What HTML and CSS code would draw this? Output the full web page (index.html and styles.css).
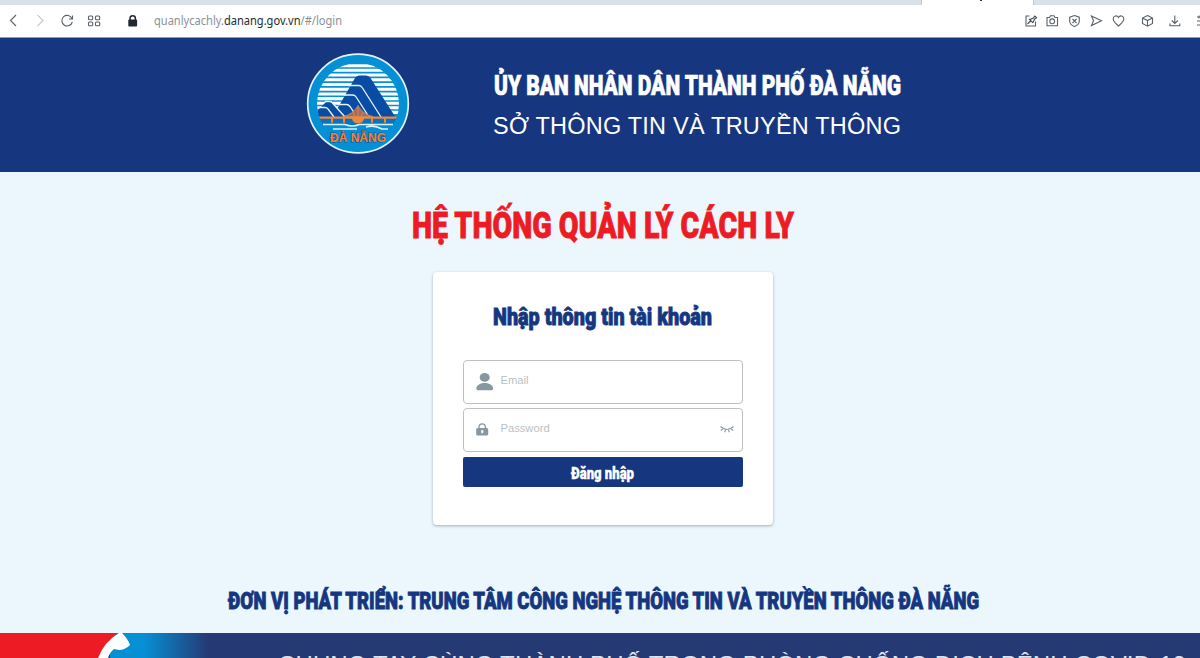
FILE: index.html
```html
<!DOCTYPE html>
<html lang="vi">
<head>
<meta charset="utf-8">
<title>Hệ thống quản lý cách ly</title>
<link rel="stylesheet" href="styles.css">
</head>
<body>
<div class="tabs"><div class="tab"><i class="tab-mark"></i></div></div>
<nav class="toolbar">
  <svg class="nav-icons" width="140" height="32" viewBox="0 0 140 32">
    <path d="M16 10l-5.500 5.500 5.500 5.500"/>
    <path class="faint" d="M37.500 10l5.500 5.500-5.500 5.500"/>
    <path d="M72 13.500a5.300 5.300 0 1 0 .3 3.500M72.500 10.500v3.500h-3.500"/>
    <g><rect x="88.500" y="11" width="4.200" height="3.800" rx="1"/><rect x="95.500" y="11" width="4.200" height="3.800" rx="1"/><rect x="88.500" y="17" width="4.200" height="3.800" rx="1"/><rect x="95.500" y="17" width="4.200" height="3.800" rx="1"/></g>
    <path class="lock" d="M130 15v-1.500a2.700 2.700 0 0 1 5.400 0V15"/><rect class="lock-body" x="128.300" y="14.500" width="8.800" height="7" rx="1"/>
  </svg>
  <div class="url">
    <svg width="192" height="32"><text x="0" y="20" textLength="188" lengthAdjust="spacingAndGlyphs">quanlycachly.<tspan class="domain">danang.gov.vn</tspan>/#/login</text></svg>
  </div>
  <svg class="tool-icons" width="180" height="32" viewBox="1020 5 180 32">
    <path d="M1029.500 16h-3.500v10h9.500v-4.500"/><path class="pin" d="M1027.500 24l3-3M1029 18.800l4 4M1030 19.500l3.300-1.500 1.500-2 1.700 1.700-2 1.500-1.500 3.300"/>
    <path d="M1047 17.500h2.500l1-1.800h3.500l1 1.800h2.500v8.300H1047z"/><circle cx="1052.200" cy="21.300" r="2.400"/>
    <path d="M1074.500 15.500l4.800 1.700v4.300q-.5 3.500-4.800 5-4.300-1.500-4.800-5v-4.300zM1072.500 19l4 4M1076.500 19l-4 4"/>
    <path d="M1091.500 16l10 4.800-10 4.800 2-4.800z"/>
    <path d="M1118.500 26c-3-2.600-5.300-4.500-5.300-7 0-3.400 3.900-4.200 5.300-1.400 1.400-2.800 5.300-2 5.300 1.400 0 2.500-2.300 4.400-5.300 7z"/>
    <path d="M1147.500 15.500l5 2.500v5.500l-5 2.700-5-2.700V18zM1142.500 18l5 2.600 5-2.600M1147.500 20.600v5.600"/>
    <path d="M1174.800 15.500v8M1171.800 20.500l3 3 3-3M1170 23.500v2.300h9.800v-2.300"/>
    <path d="M1197 17h5M1197 21h5M1197 25h5M1199 15.500v3"/>
  </svg>
</nav>
<header class="banner">
  <svg class="logo" width="104" height="104" viewBox="0 0 104 104">
    <defs><clipPath id="disc"><circle cx="52" cy="52" r="41"/></clipPath></defs>
    <ellipse class="seal" cx="52" cy="51.500" rx="50.300" ry="49.300"/>
    <g clip-path="url(#disc)">
      <path class="sky" d="M8 13.800h88M8 18.300h88M8 23h88M8 27.800h88M8 32.500h88M8 37.200h88M8 42h88M8 46.600h88M8 51.200h88M8 55.800h88M8 60.400h88"/>
      <path class="hill" d="M26 66L49 26q1.500-2.500 4-2.500h7q3 0 4.500 2.500L90 66z"/>
      <path class="hill" d="M8 62l12-12q2.500-2 5 0l16 16H8z"/>
      <path class="ridge" d="M42 33.500h11q2 0 3.500 2.500L75 65M37.500 43h9.500q2 0 3.500 2.500L63 65M31.500 52.500h9q2 0 3.500 2L51 65M19 49.500h4.500q2 0 3 1.500L39 65M14 55.500h5q2 0 3 1.500l6 8"/>
      <rect class="sea" x="8" y="65" width="88" height="8"/>
      <path class="wave" d="M17 72.500h22q8 3 14 0h34M27 77h24M60 75q8-2.500 16 2h6"/>
      <path class="lotus" d="M12 64.500h80v2.200H80v4h-2v-4H67v4h-2v-4h-7q-1 4.500-6 4.500t-6-4.500h-7v4h-2v-4H27v4h-2v-4H12z"/>
      <path class="cables" d="M52 54q-6 9-15 10.500h30Q58 63 52 54zM52 53v12M47 60l2 5M57 60l-2 5"/>
    </g>
    <text class="logo-name" x="24" y="89.500" textLength="56" lengthAdjust="spacingAndGlyphs">ĐÀ NẴNG</text>
  </svg>
  <div class="agency">
    <svg width="420" height="110">
      <text class="condensed agency-top" x="1" y="49.500" textLength="407" lengthAdjust="spacingAndGlyphs">ỦY BAN NHÂN DÂN THÀNH PHỐ ĐÀ NẴNG</text>
      <text class="agency-sub" x="0" y="89" textLength="408">SỞ THÔNG TIN VÀ TRUYỀN THÔNG</text>
    </svg>
  </div>
</header>
<main>
  <h1><svg width="384" height="60"><text class="condensed system" x="1" y="45" textLength="382" lengthAdjust="spacingAndGlyphs">HỆ THỐNG QUẢN LÝ CÁCH LY</text></svg></h1>
  <form class="card">
    <h2><svg width="220" height="40"><text class="condensed form-title" x="0" y="22.500" textLength="219" lengthAdjust="spacingAndGlyphs">Nhập thông tin tài khoản</text></svg></h2>
    <label class="field">
      <svg width="18" height="18" viewBox="0 0 18 18"><ellipse cx="8.700" cy="4.400" rx="5" ry="4.400"/><path d="M.3 15.500c0-3 3.500-5.500 8.400-5.500s8.500 2.500 8.500 5.500q0 1.700-1.700 1.700H2q-1.700 0-1.700-1.700z"/></svg>
      <input type="text" placeholder="Email">
    </label>
    <label class="field">
      <svg width="18" height="18" viewBox="0 0 18 18"><path class="shackle" d="M3 8.500V6a3.200 3.200 0 0 1 6.400 0v2.500"/><rect x=".2" y="7" width="12" height="7.500" rx="1.500"/><path class="keyhole" d="M5 9.300h2.500l-.5 3H5.500z"/></svg>
      <input type="text" placeholder="Password">
      <svg class="eye" width="14" height="10" viewBox="0 0 14 10"><path d="M.5 1.500Q7 7.500 13.500 1.500M3 3.600L.8 5.500M5.500 5L4.700 7.300M8.500 5l.8 2.300M11 3.600l2.200 1.900"/></svg>
    </label>
    <button type="button"><svg width="64" height="30"><text class="condensed submit" x="0" y="21.500" textLength="63" lengthAdjust="spacingAndGlyphs">Đăng nhập</text></svg></button>
  </form>
  <p class="developer"><svg width="752" height="46"><text class="condensed developer-name" x="1" y="28.500" textLength="751" lengthAdjust="spacingAndGlyphs">ĐƠN VỊ PHÁT TRIỂN: TRUNG TÂM CÔNG NGHỆ THÔNG TIN VÀ TRUYỀN THÔNG ĐÀ NẴNG</text></svg></p>
</main>
<footer>
  <svg width="1200" height="25" viewBox="0 0 1200 25">
    <defs><linearGradient id="fade"><stop offset="0" stop-color="#078fd3"/><stop offset=".35" stop-color="#078fd3"/><stop offset="1" stop-color="#253a75"/></linearGradient></defs>
    <rect class="fade" x="110" width="98" height="25"/>
    <path class="red" d="M0 0h118Q105 10 98 25H0z"/>
    <path class="phone" d="M98 25Q104 9 119 0h3q6 6 8 12-5 5-11 5l-5-1q-4 3-6 9z"/>
    <text class="slogan" x="278" y="40" textLength="908">CHUNG TAY CÙNG THÀNH PHỐ TRONG PHÒNG CHỐNG DỊCH BỆNH COVID-19</text>
  </svg>
</footer>
</body>
</html>
```

FILE: styles.css
```css
* { box-sizing: border-box; }
body { margin: 0; width: 1200px; height: 658px; overflow: hidden; background: #ebf7fd; font-family: "Liberation Sans", Arial, sans-serif; display: flex; flex-direction: column; }
svg { display: block; flex-shrink: 0; overflow: visible; }
h1, h2, p { margin: 0; }
.tabs { height: 5px; flex-shrink: 0; background: #d9e1e9; padding-left: 921px; }
.tab { width: 113px; height: 5px; background: #fff; border: solid #bfc7d0; border-width: 0 1px; padding-left: 58px; }
.tab-mark { display: block; width: 2px; height: 1px; background: #333; }
.toolbar { height: 33px; flex-shrink: 0; display: flex; background: #fff; border-bottom: 1px solid #8b9cc0; }
.nav-icons, .tool-icons { fill: none; stroke: #596169; stroke-width: 1.1; }
.tool-icons { overflow: hidden; }
.faint { stroke: #c5cacd; }
.pin { stroke: #3f474f; stroke-width: 1.1; }
.lock { stroke: #20272e; stroke-width: 1.5; }
.lock-body { fill: #20272e; stroke: none; }
.url { flex: 1; padding-left: 14px; }
.url text { font: 12px "Noto Sans", sans-serif; fill: #899197; }
.url .domain { fill: #252b31; }
.banner { height: 134px; flex-shrink: 0; background: #163680; display: flex; padding-left: 306px; }
.logo { margin-top: 14px; }
.seal { fill: #058fd5; stroke: #e0f6fb; stroke-width: 1.7; }
.sky { stroke: #fff; stroke-width: 3.1; fill: none; }
.hill { fill: #084da3; }
.ridge { stroke: #e8f6fc; stroke-width: 1.3; fill: none; }
.sea { fill: #0874bd; }
.wave { stroke: #d6f3fa; stroke-width: 1.6; fill: none; }
.lotus { fill: #ef873c; }
.cables { fill: #a46b60; stroke: #e88a4c; stroke-width: .8; }
.logo-name { font: bold 12px "Liberation Sans", sans-serif; fill: #f58233; stroke: #234a85; stroke-width: 1; paint-order: stroke; }
.agency { padding: 7px 0 0 83px; }
.condensed { font-family: Roboto, sans-serif; font-weight: 900; }
.agency-top { font-size: 28px; fill: #fff; stroke: #fff; stroke-width: .7; }
.agency-sub { font-size: 23.5px; fill: #fff; }
main { height: 461px; flex-shrink: 0; display: flex; flex-direction: column; align-items: center; padding-left: 5px; }
h1 { margin-top: 21px; height: 79px; }
.system { font-size: 37px; fill: #ed1c24; stroke: #ed1c24; stroke-width: .8; }
.card { width: 340px; height: 253px; background: #fff; border-radius: 4px; box-shadow: 0 1px 3px #0000004d; padding: 30px 30px 0 30px; display: flex; flex-direction: column; }
h2 { height: 58px; align-self: center; }
.form-title { font-size: 24.5px; fill: #163680; stroke: #163680; stroke-width: .9; }
.field { height: 44px; flex-shrink: 0; margin-bottom: 4px; border: 1px solid #bfc0c3; border-radius: 4px; display: flex; align-items: flex-start; padding: 12px 8px 0 12px; fill: #8697a1; }
.field input { width: 200px; height: 16px; margin: -1px 0 0 7px; padding: 0; border: 0; outline: 0; background: transparent; font: 11.2px "Liberation Sans", Arial, sans-serif; }
.field input::placeholder { color: #babfc4; opacity: 1; }
.shackle { fill: none; stroke: #8697a1; stroke-width: 1.3; }
.keyhole { fill: #fff; }
.eye { margin: 4px 0 0 auto; fill: none; stroke: #87969d; stroke-width: 1.1; }
button { height: 30px; border: 0; padding: 0; background: #163680; border-radius: 2px; display: flex; justify-content: center; margin-top: 1px; }
.submit { font-size: 16.5px; fill: #fff; stroke: #fff; stroke-width: .4; }
.developer { margin-top: 55px; }
.developer-name { font-size: 24px; fill: #163680; stroke: #163680; stroke-width: .9; }
footer { height: 25px; flex-shrink: 0; background: #253a75; overflow: hidden; }
.fade { fill: url(#fade); }
.red { fill: #ed1c24; }
.phone { fill: #fff; }
.slogan { font-size: 24px; fill: #dde4ef; }
```
